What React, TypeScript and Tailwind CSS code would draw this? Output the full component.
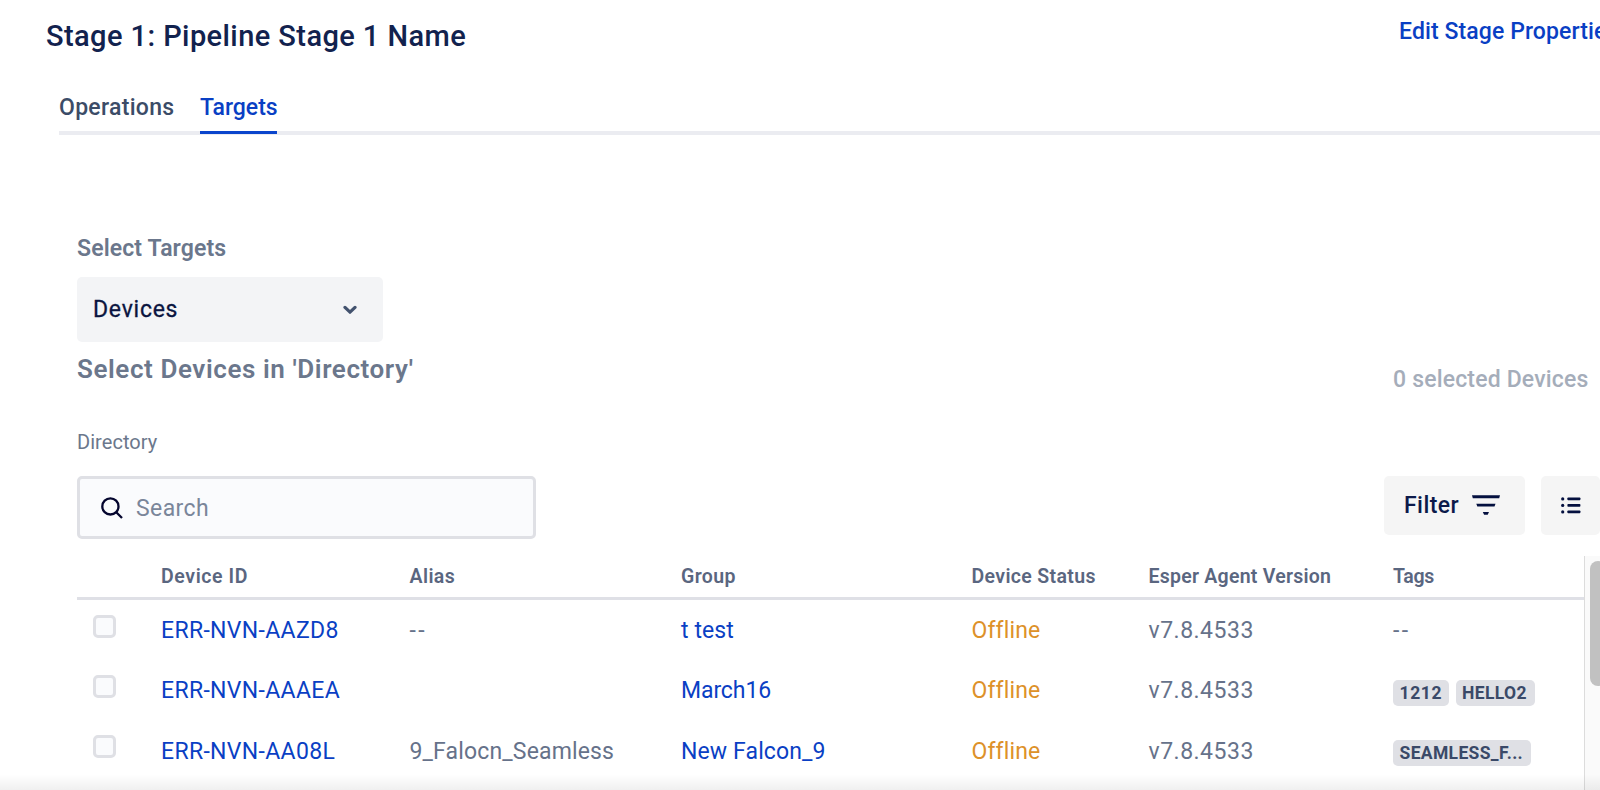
import type { ReactNode } from "react";

type Device = {
  id: string;
  alias: string;
  group: string;
  groupSpacing: string;
  version: string;
  tags: { label: string; width: string }[] | null;
};

const devices: Device[] = [
  { id: "ERR-NVN-AAZD8", alias: "--", group: "t test", groupSpacing: "tracking-[0.1px]", version: "v7.8.4533", tags: null },
  {
    id: "ERR-NVN-AAAEA",
    alias: "",
    group: "March16",
    groupSpacing: "tracking-[-0.1px]",
    version: "v7.8.4533",
    tags: [
      { label: "1212", width: "w-[56px] tracking-[0.6px]" },
      { label: "HELLO2", width: "w-[79px] tracking-[0.35px]" },
    ],
  },
  {
    id: "ERR-NVN-AA08L",
    alias: "9_Falocn_Seamless",
    group: "New Falcon_9",
    groupSpacing: "tracking-[0.12px]",
    version: "v7.8.4533",
    tags: [{ label: "SEAMLESS_F...", width: "w-[138px] tracking-[0.35px]" }],
  },
];

const columns = "grid grid-cols-[84px_248.5px_271.5px_290.5px_177px_244.5px_1fr]";

function ChevronIcon() {
  return (
    <svg width="14" height="10" viewBox="0 0 14 10" fill="none" stroke="#42526e" strokeWidth="3.2" strokeLinecap="round" strokeLinejoin="round">
      <path d="M2 2.4 7 7.2 12 2.4" />
    </svg>
  );
}

function SearchIcon() {
  return (
    <svg width="22" height="22" viewBox="0 0 22 22" fill="none" stroke="#04052e" strokeWidth="2.3">
      <circle cx="9.4" cy="9.4" r="8.1" />
      <path d="m15 15 6 6" />
    </svg>
  );
}

function FilterIcon() {
  return (
    <svg width="28" height="20" viewBox="0 0 28 20" fill="#04103f">
      <path d="M0 .3h28l-.8 2.9H.8zM4.3 8.8h19.2l-1 2.7H5.3zM10.8 17.1h6.2l-1.3 2.7h-3.6z" />
    </svg>
  );
}

function ListIcon() {
  return (
    <svg width="20" height="18" viewBox="0 0 20 18" fill="#04103f">
      <circle cx="1.7" cy="2.9" r="1.6" />
      <circle cx="1.7" cy="9.4" r="1.6" />
      <circle cx="1.7" cy="15.9" r="1.6" />
      <rect x="6.4" y="1.5" width="13" height="2.8" rx=".8" />
      <rect x="6.4" y="8" width="13" height="2.8" rx=".8" />
      <rect x="6.4" y="14.5" width="13" height="2.8" rx=".8" />
    </svg>
  );
}

function Tag({ className, children }: { className: string; children: ReactNode }) {
  return (
    <span className={`h-[26px] rounded-[5px] bg-[#dfe0e5] pl-[6.5px] text-[17.5px] leading-[26px] font-bold whitespace-nowrap text-[#3a4968] ${className}`}>
      {children}
    </span>
  );
}

export default function App() {
  return (
    <div className="relative flex h-[790px] w-[1600px] flex-col overflow-hidden bg-white font-['Roboto',sans-serif] text-[23px] leading-8">
      <header className="flex h-[91px] shrink-0 items-start justify-between pt-4 pl-[46px]">
        <h1 className="text-[29px] leading-10 font-medium tracking-[0.42px] text-[#12224e]">Stage 1: Pipeline Stage 1 Name</h1>
        <a className="w-[201px] font-medium tracking-[0.1px] whitespace-nowrap text-[#0a3fc4]">Edit Stage Properties</a>
      </header>

      <nav className="ml-[59px] flex h-11 shrink-0 gap-[25px] border-b-4 border-[#ebecf1] font-medium">
        <button className="flex h-10 w-[116px] items-start pt-px tracking-[0.3px] text-[#3b4c67]">Operations</button>
        <button className="flex h-[43px] w-[77px] items-start border-b-[3px] border-[#0a45cc] pt-px text-[#0a3fc4]">Targets</button>
      </nav>

      <main className="flex min-h-0 grow flex-col pt-[98px] pl-[77px]">
        <label className="font-semibold tracking-[0.12px] text-[#6b778c]">Select Targets</label>
        <div className="mt-3 flex h-[65px] w-[306px] shrink-0 items-center justify-between rounded-[5px] bg-[#f3f4f6] pr-[26px] pl-4">
          <span className="pt-px tracking-[0.75px] text-[#0a1440] [-webkit-text-stroke:0.3px_#0a1440]">Devices</span>
          <ChevronIcon />
        </div>

        <div className="flex h-[88px] shrink-0 justify-between">
          <h2 className="mt-[11px] text-[26px] font-semibold tracking-[0.58px] text-[#6b778c]">Select Devices in 'Directory'</h2>
          <span className="mt-[22px] w-[207px] font-medium tracking-[0.17px] text-[#a5adba]">0 selected Devices</span>
        </div>

        <p className="h-[46px] shrink-0 text-[20px] leading-6 tracking-[0.05px] text-[#6b778c]">Directory</p>

        <div className="flex h-20 shrink-0 items-start">
          <div className="flex h-[63px] w-[459px] items-center rounded-[5px] border-[3px] border-[#dfe0e5] bg-[#fafbfd] pl-[21px]">
            <SearchIcon />
            <span className="ml-[13px] pt-[2px] tracking-[0.4px] text-[#7a869a]">Search</span>
          </div>
          <button className="ml-[848px] flex h-[58.5px] w-[141px] items-center rounded-[5px] bg-[#f5f5f5] pl-5">
            <span className="w-[67.5px] pt-[2px] text-left font-medium tracking-[0.45px] text-[#0c1a4a]">Filter</span>
            <FilterIcon />
          </button>
          <button className="ml-4 flex h-[58.5px] grow items-center rounded-[5px] bg-[#f5f5f5] pl-5">
            <ListIcon />
          </button>
        </div>

        <div className="flex min-h-0 grow">
          <div className="w-[1507px] shrink-0">
            <div className={`${columns} h-11 border-b-[3px] border-[#dfe0e6] pt-[9px] text-[19.5px] leading-6 font-semibold text-[#5a6680]`}>
              <span />
              <span className="tracking-[0.6px]">Device ID</span>
              <span className="tracking-[0.4px]">Alias</span>
              <span className="tracking-[0.4px]">Group</span>
              <span className="tracking-[0.35px]">Device Status</span>
              <span className="tracking-[0.25px]">Esper Agent Version</span>
              <span className="tracking-[-0.3px]">Tags</span>
            </div>
            {devices.map((d) => (
              <div key={d.id} className={`${columns} h-[60.3px] items-start pt-[14.5px] whitespace-nowrap`}>
                <span className="ml-4 h-[23px] w-[23px] rounded-[5px] border-[3px] border-[#dfe0e5] bg-[#fafbfd]" />
                <a className="pt-[0.5px] tracking-[0.33px] text-[#0a3fc4]">{d.id}</a>
                <span className={d.alias === "--" ? "pt-[0.5px] tracking-[2.5px] text-[#66728a]" : "pt-[0.5px] tracking-[0.15px] text-[#66728a]"}>{d.alias}</span>
                <a className={`pt-[0.5px] text-[#0a3fc4] ${d.groupSpacing}`}>{d.group}</a>
                <span className="pt-[0.5px] tracking-[0.15px] text-[#dd9129]">Offline</span>
                <span className="pt-[0.5px] tracking-[0.5px] text-[#66728a]">{d.version}</span>
                {d.tags ? (
                  <span className="mt-[5px] flex gap-[6.5px]">
                    {d.tags.map((t) => (
                      <Tag key={t.label} className={t.width}>
                        {t.label}
                      </Tag>
                    ))}
                  </span>
                ) : (
                  <span className="pt-[0.5px] tracking-[2.5px] text-[#66728a]">--</span>
                )}
              </div>
            ))}
          </div>
          <div className="grow overflow-hidden border-l border-[#dcdcdc] bg-[#fafafa] pt-[5px] pl-[5px]">
            <div className="h-[125px] w-4 rounded-full bg-[#c1c1c1]" />
          </div>
        </div>
      </main>

      <div className="pointer-events-none absolute inset-x-0 bottom-0 h-4 bg-linear-to-b from-black/0 to-black/6" />
    </div>
  );
}
